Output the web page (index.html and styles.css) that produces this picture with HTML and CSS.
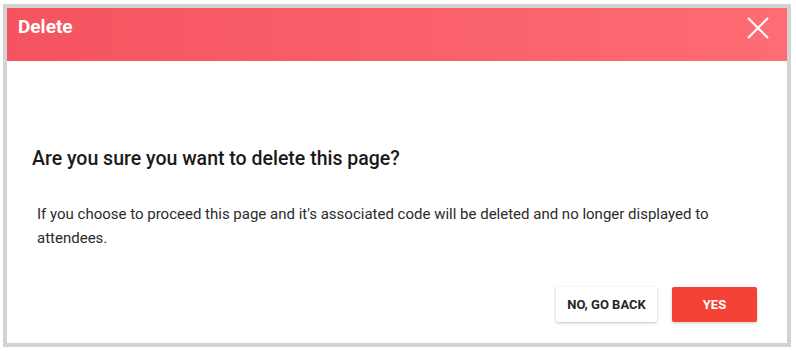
FILE: index.html
```html
<!DOCTYPE html>
<html lang="en">
<head>
  <meta charset="UTF-8">
  <title>Delete page</title>
  <link rel="stylesheet" href="styles.css">
</head>
<body>
  <div class="modal">
    <header class="modal-head">
      <span class="modal-title">Delete</span>
      <button class="close" aria-label="Close">
        <svg width="22" height="22" viewBox="0 0 22 22"><path d="M1 1 L21 21 M21 1 L1 21" stroke="#fff" stroke-width="2.2" fill="none"/></svg>
      </button>
    </header>
    <main class="modal-body">
      <h2>Are you sure you want to delete this page?</h2>
      <p>If you choose to proceed this page and it's associated code will be deleted and no longer displayed to attendees.</p>
    </main>
    <footer class="modal-actions">
      <button class="btn btn-back">NO, GO BACK</button>
      <button class="btn btn-yes">YES</button>
    </footer>
  </div>
</body>
</html>
```

FILE: styles.css
```css
:root {
  --red: #f44336;
  --frame: #d3d3d3;
  --text: #1f1f1f;
}
* { box-sizing: border-box; margin: 0; padding: 0; }
body { background: #fff; font-family: Roboto, 'Liberation Sans', sans-serif; color: var(--text); }

.modal {
  width: 788px;
  height: 343px;
  margin: 4px 0 0 3px;
  border: 4px solid var(--frame);
  background: #fff;
  display: flex;
  flex-direction: column;
}
.modal-head {
  height: 53px;
  padding: 8px 18px 0 11px;
  display: flex;
  justify-content: space-between;
  align-items: flex-start;
  background: linear-gradient(to right, #f4545f, #ff6c74);
}
.modal-title { color: #fff; font-size: 19px; font-weight: 700; line-height: 22px; }
.close { background: none; border: none; margin-top: 1px; width: 22px; height: 22px; cursor: pointer; }
.close svg { display: block; }

.modal-body { padding: 86px 25px 0 25px; }
.modal-body h2 { font-size: 19.5px; font-weight: 500; line-height: 24px; color: #1a1a1a; }
.modal-body p { margin-top: 31px; padding-left: 5px; font-size: 15px; line-height: 24px; color: #2b2b2b; }

.modal-actions {
  margin-top: auto;
  padding: 0 30px 21px;
  display: flex;
  justify-content: flex-end;
  gap: 15px;
}
.btn {
  height: 35px;
  border: none;
  border-radius: 2px;
  font-family: Roboto, 'Liberation Sans', sans-serif;
  font-size: 13px;
  font-weight: 700;
  cursor: pointer;
}
.btn-back { width: 101px; background: #fff; color: #262626; box-shadow: 0 1px 3px rgba(0,0,0,0.25); }
.btn-yes { width: 85px; background: var(--red); color: #fff; box-shadow: 0 1px 3px rgba(0,0,0,0.2); }
```
